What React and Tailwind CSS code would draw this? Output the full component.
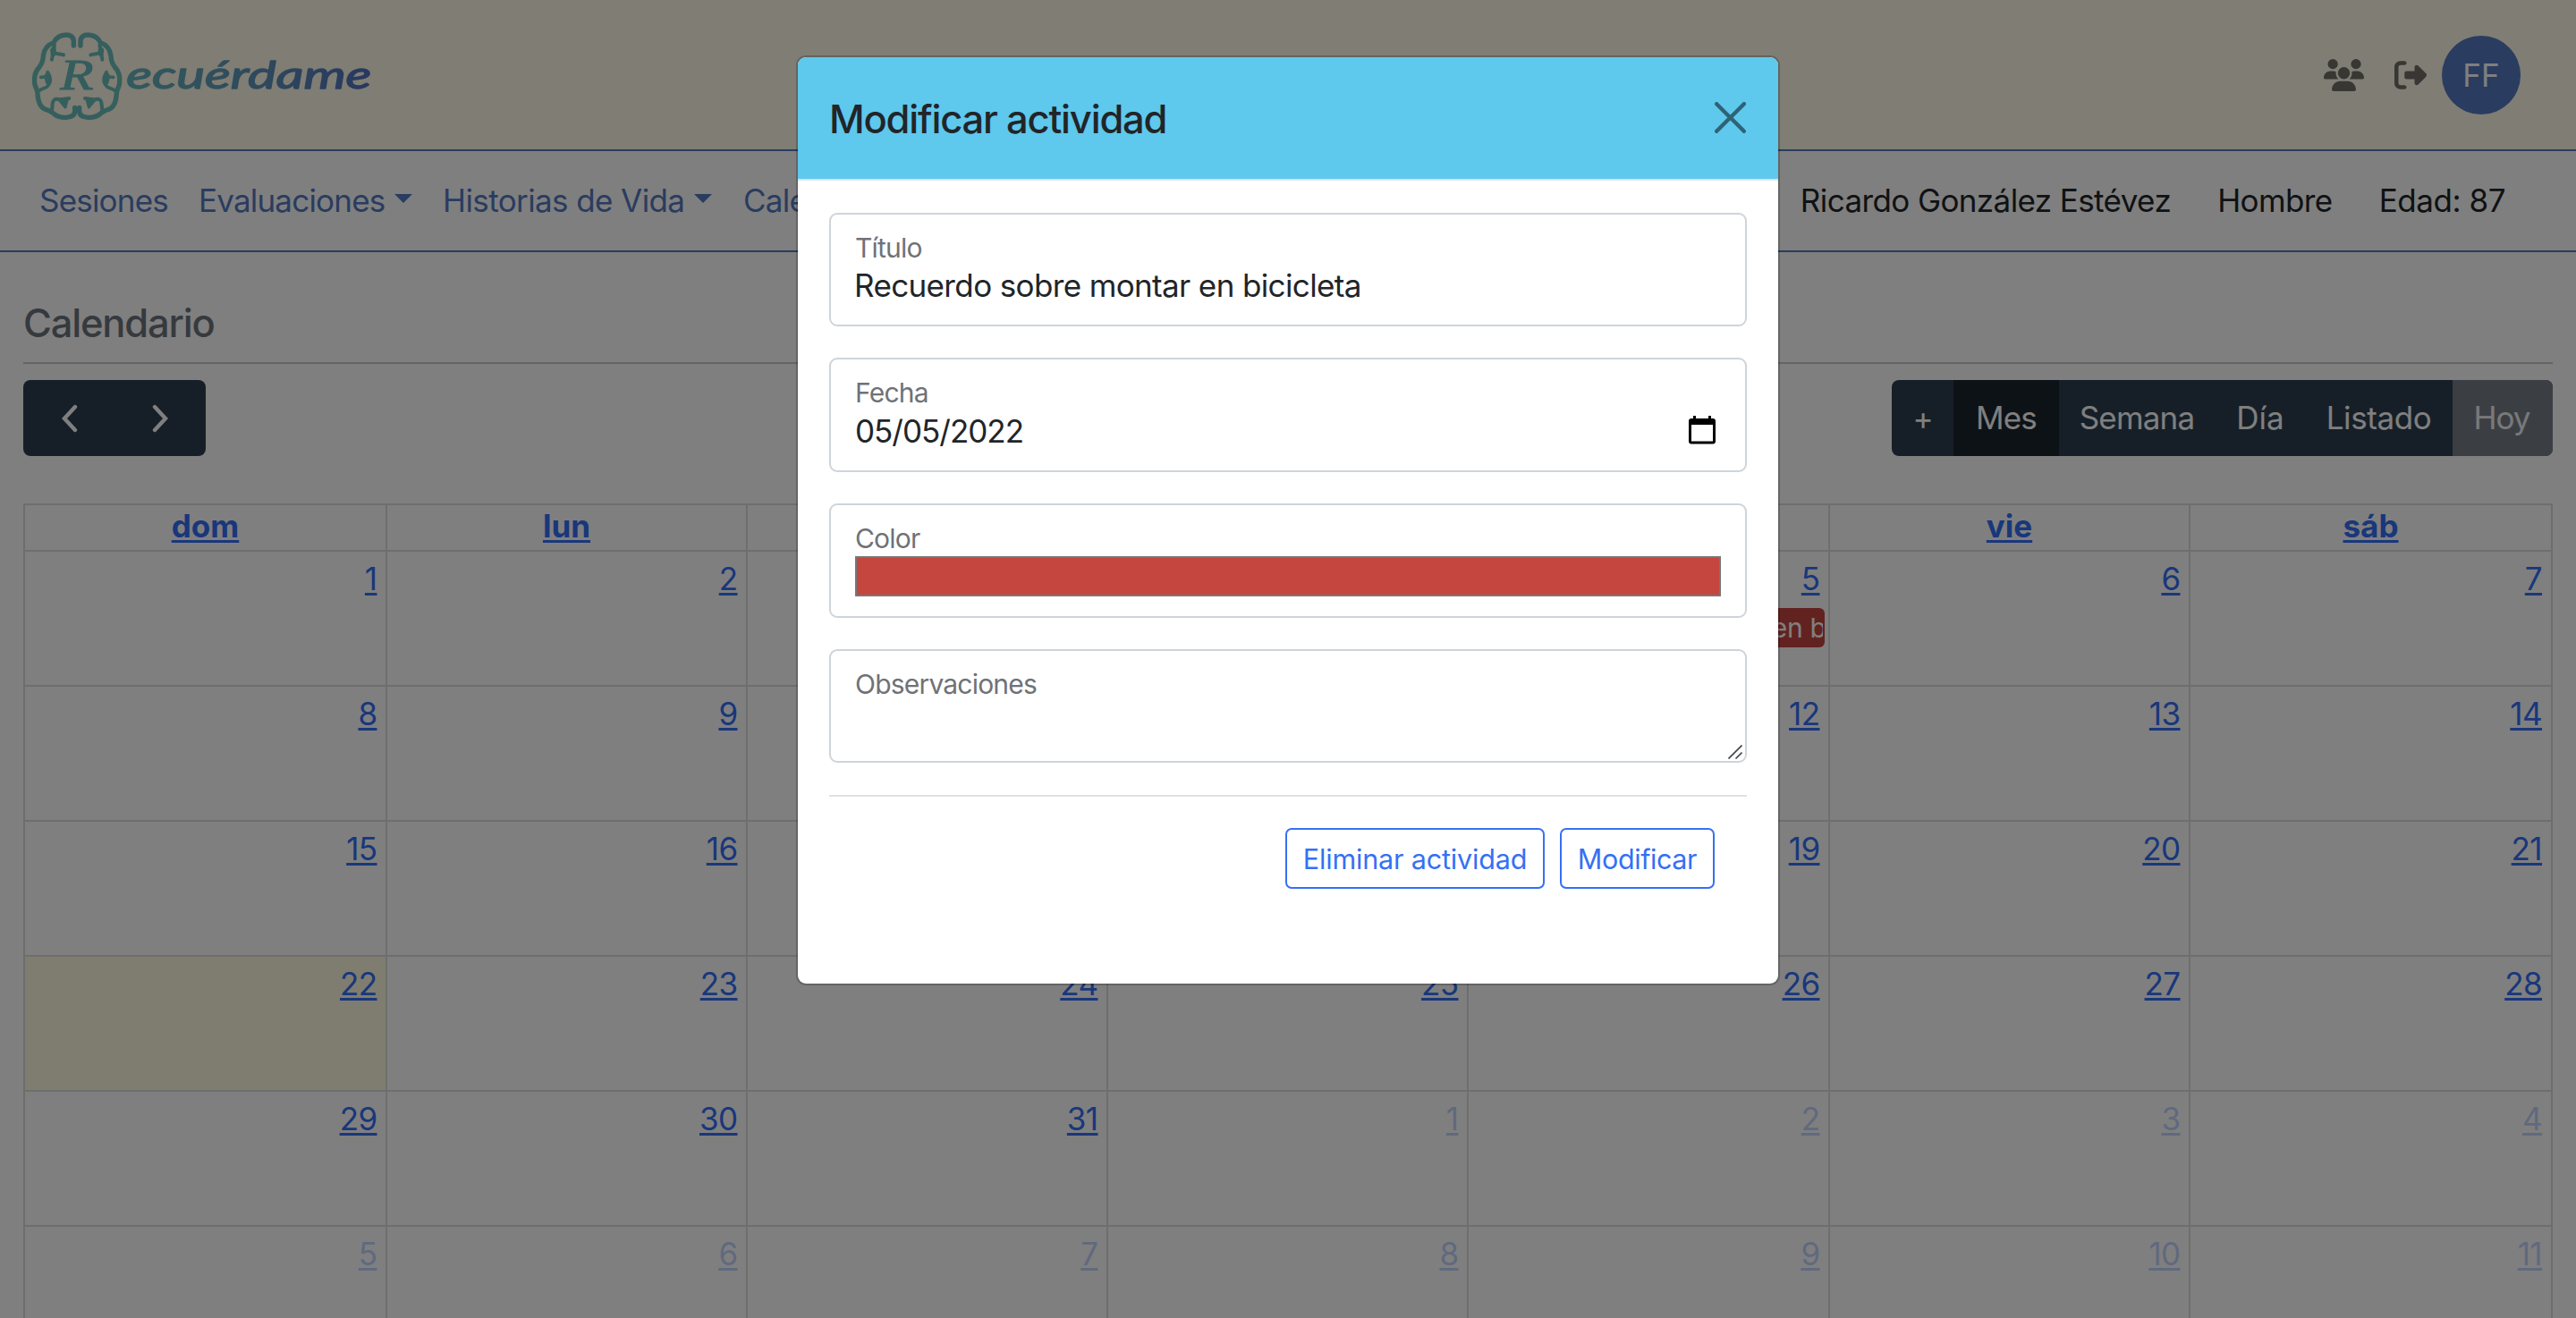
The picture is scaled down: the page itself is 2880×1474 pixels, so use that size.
import React from "react";
import { FaUsers } from "react-icons/fa6";

const DAYS = ["dom", "lun", "mar", "mié", "jue", "vie", "sáb"];
const WEEKS = [
  [1, 2, 3, 4, 5, 6, 7],
  [8, 9, 10, 11, 12, 13, 14],
  [15, 16, 17, 18, 19, 20, 21],
  [22, 23, 24, 25, 26, 27, 28],
  [29, 30, 31, 1, 2, 3, 4],
  [5, 6, 7, 8, 9, 10, 11],
];
const GRID = "grid grid-cols-[405px_403px_403px_403px_404px_403px_403px]";

function BrainHalf() {
  return (
    <g fill="none" strokeLinecap="round" strokeLinejoin="round">
      <path
        strokeWidth="16"
        d="M157 78V64C157 48 146 42 132 42C112 42 98 52 90 68C72 74 58 88 55 112C55 128 50 140 42 150C28 164 24 184 26 204C27 216 35 224 36 238C37 262 44 284 62 292C74 296 84 300 92 308C102 316 116 320 132 319C150 318 161 312 161 298V286"
      />
      <path strokeWidth="12" d="M91 70C96 82 86 94 92 102C102 108 114 105 123 109M90 104C85 110 85 116 84 125" />
      <path strokeWidth="11" fill="url(#ink)" d="M91 84L94 104L86 112L84 92Z" />
      <path strokeWidth="11" d="M47 184C58 185 68 180 70 167M70 167C82 186 82 202 68 216C60 222 48 222 38 232" />
      <path strokeWidth="9" fill="url(#ink)" d="M62 184L70 176L76 196L68 204Z" />
      <path strokeWidth="12" d="M84 294C88 276 82 262 98 257C112 262 130 256 142 255" />
      <path strokeWidth="9" fill="url(#ink)" d="M110 262L129 285L136 258Z" />
    </g>
  );
}

function Logo() {
  return (
    <svg width="400" height="120" viewBox="0 0 1200 360">
      <defs>
        <linearGradient id="ink" gradientUnits="userSpaceOnUse" x1="0" x2="1160" y1="0" y2="0">
          <stop offset="0" stopColor="#6cc2b8" />
          <stop offset="0.3" stopColor="#66b4bc" />
          <stop offset="0.65" stopColor="#5e94b8" />
          <stop offset="1" stopColor="#5070c0" />
        </linearGradient>
      </defs>
      <g stroke="url(#ink)">
        <BrainHalf />
        <g transform="translate(337 0) scale(-1 1)">
          <BrainHalf />
        </g>
      </g>
      <g fontStyle="italic" fill="url(#ink)" stroke="url(#ink)" strokeLinejoin="round">
        <text x="112" y="226" fontFamily="'Liberation Serif', serif" fontSize="146" textLength="112" lengthAdjust="spacingAndGlyphs" strokeWidth="3">
          R
        </text>
        <text x="334" y="223" fontFamily="Lato, sans-serif" fontSize="128" textLength="822" lengthAdjust="spacingAndGlyphs" strokeWidth="4">
          ecuérdame
        </text>
      </g>
    </svg>
  );
}

function Caret() {
  return <span className="mb-[5px] ml-[11px] h-0 w-0 border-x-[10.5px] border-t-[10.5px] border-x-transparent border-t-[#5478c0]" />;
}

function Header() {
  return (
    <header className="flex h-[169px] items-start justify-between border-b-2 border-[#5478c0] bg-[#fffae8] pl-[30px] pr-[62px]">
      <div className="pt-[25px]">
        <Logo />
      </div>
      <div className="flex h-[168px] items-center text-[#706e66]">
        <FaUsers className="h-[36px] w-[45px]" />
        <svg className="ml-[34px] h-[36px] w-[36px]" viewBox="0 0 512 512" fill="currentColor">
          <path d="M377.9 105.9L500.7 228.7c7.2 7.2 11.3 17.1 11.3 27.3s-4.1 20.1-11.3 27.3L377.9 406.1c-6.4 6.4-15 9.9-24 9.9c-18.7 0-33.9-15.2-33.9-33.9l0-62.1-128 0c-17.7 0-32-14.3-32-32l0-64c0-17.7 14.3-32 32-32l128 0 0-62.1c0-18.7 15.2-33.9 33.9-33.9c9 0 17.6 3.6 24 9.9zM160 96L96 96c-17.7 0-32 14.3-32 32l0 256c0 17.7 14.3 32 32 32l64 0c17.7 0 32 14.3 32 32s-14.3 32-32 32l-64 0c-53 0-96-43-96-96L0 128C0 75 43 32 96 32l64 0c17.7 0 32 14.3 32 32s-14.3 32-32 32z" />
        </svg>
        <div className="ml-[17px] flex h-[88px] w-[88px] items-center justify-center rounded-full bg-[#5478c0] text-[35px] text-white">FF</div>
      </div>
    </header>
  );
}

function Nav() {
  return (
    <nav className="flex h-[113px] items-center justify-between border-b-2 border-[#5478c0] pl-[44px] pr-[79px]">
      <div className="flex items-center text-[#5478c0]">
        <span className="w-[178px] tracking-[-0.8px]">Sesiones</span>
        <span className="flex w-[273px] items-center tracking-[-0.8px]">
          Evaluaciones
          <Caret />
        </span>
        <span className="flex w-[336px] items-center tracking-[-0.6px]">
          Historias de Vida
          <Caret />
        </span>
        <span className="tracking-[-0.7px]">Calendario</span>
      </div>
      <div className="flex items-center gap-[52px] text-[#212529]">
        <span className="tracking-[-0.6px]">Ricardo González Estévez</span>
        <span className="tracking-[-0.6px]">Hombre</span>
        <span className="tracking-[-0.45px]">Edad: 87</span>
      </div>
    </nav>
  );
}

function Toolbar() {
  return (
    <div className="mt-[18px] flex h-[85px] justify-between text-white">
      <div className="flex w-[204px] items-center rounded-[8px] bg-[#2c3e50] pl-[42px]">
        <svg width="20" height="32" viewBox="0 0 20 32" fill="none" stroke="currentColor" strokeWidth="4.4" strokeLinecap="round" strokeLinejoin="miter">
          <path d="M16 3L4 16L16 29" />
        </svg>
        <svg className="ml-[81px]" width="20" height="32" viewBox="0 0 20 32" fill="none" stroke="currentColor" strokeWidth="4.4" strokeLinecap="round" strokeLinejoin="miter">
          <path d="M4 3L16 16L4 29" />
        </svg>
      </div>
      <div className="flex overflow-hidden rounded-[8px] bg-[#2c3e50]">
        <button className="w-[69px] pl-[1px]">+</button>
        <button className="w-[118px] bg-[#1a252f] tracking-[-0.8px]">Mes</button>
        <button className="w-[175px] pr-[1px] tracking-[-0.8px]">Semana</button>
        <button className="w-[101px] pr-[1px] tracking-normal">Día</button>
        <button className="w-[164px] pr-[1px] tracking-[-0.4px]">Listado</button>
        <button className="w-[112px] bg-[#767f89] pr-[2px] tracking-[-1px] text-[#f2f3f4]">Hoy</button>
      </div>
    </div>
  );
}

function Calendar() {
  return (
    <div className="mt-[53px] h-[911px] overflow-hidden border-2 border-b-0 border-[#dcdcdc] text-[#326ef6]">
      <div className={GRID + " h-[52px] border-b-2 border-[#dcdcdc]"}>
        {DAYS.map((d, i) => (
          <div key={d} className={"flex items-center justify-center pb-[4px] font-bold " + (i < 6 ? "border-r-2 border-[#dcdcdc]" : "")}>
            <a className="leading-[44px] underline decoration-[3px] underline-offset-[3px]">{d}</a>
          </div>
        ))}
      </div>
      {WEEKS.map((w, r) => (
        <div key={r} className={GRID + " h-[151px] border-b-2 border-[#dcdcdc]"}>
          {w.map((n, c) => (
            <div
              key={c}
              className={
                "flex min-w-0 flex-col pt-1 " +
                (c < 6 ? "border-r-2 border-[#dcdcdc] pr-[9.5px] " : "pr-[10px] ") +
                (r === 3 && c === 0 ? "bg-[#fffadf]" : "")
              }
            >
              <a
                className={
                  "self-end leading-[52px] tracking-[-0.6px] underline decoration-[3px] underline-offset-[3px] " +
                  ((r === 4 && c > 2) || r === 5 ? "opacity-30" : "")
                }
              >
                {n}
              </a>
              {r === 0 && c === 4 && (
                <div className="-mr-[5px] ml-[4px] mt-[7px] h-[44px] rounded-[6px] bg-[#c44540] px-[2px] text-[30px] leading-[44px] text-white">
                  <div className="flex justify-end overflow-hidden whitespace-nowrap">
                    <span className="-mr-[102px] tracking-[-0.3px]">Recuerdo sobre montar en bicicleta</span>
                  </div>
                </div>
              )}
            </div>
          ))}
        </div>
      ))}
    </div>
  );
}

function Field({ label, className, children }) {
  return (
    <div className={"relative rounded-[9px] border-2 border-[#ced4da] bg-white px-[27px] pt-[19px] " + className}>
      <div className="text-[30px] leading-[36px] tracking-[-0.8px] text-[#6f7276]">{label}</div>
      {children}
    </div>
  );
}

function Modal() {
  return (
    <div className="flex h-[1040px] w-[1100px] flex-col rounded-[11px] border-2 border-black/20 bg-white bg-clip-padding text-[#212529]">
      <div className="flex h-[138px] items-center justify-between rounded-t-[9px] border-b-2 border-[#dee2e6] bg-[#5ec8ed] pl-[35px] pr-[36px]">
        <h2 className="pt-[3px] text-[43.5px] font-medium tracking-[-1.2px]">Modificar actividad</h2>
        <svg width="35" height="35" viewBox="0 0 16 16" className="mb-[2px] opacity-50" fill="#000">
          <path d="M.293.293a1 1 0 011.414 0L8 6.586 14.293.293a1 1 0 111.414 1.414L9.414 8l6.293 6.293a1 1 0 01-1.414 1.414L8 9.414l-6.293 6.293a1 1 0 01-1.414-1.414L6.586 8 .293 1.707a1 1 0 010-1.414z" />
        </svg>
      </div>
      <div className="flex flex-col px-[35px] pt-[36px]">
        <Field label="Título" className="h-[127px]">
          <div className="-ml-[1px] mt-[2px] leading-[44px] tracking-[-0.63px]">Recuerdo sobre montar en bicicleta</div>
        </Field>
        <Field label="Fecha" className="mt-[35px] h-[128px]">
          <div className="mt-[3px] flex items-center justify-between pr-[6px] leading-[44px]">
            <span className="tracking-[-1px]">05/05/2022</span>
            <svg className="mb-[2px]" width="30" height="32" viewBox="0 0 30 32" fill="#000">
              <path fillRule="evenodd" d="M5 0H8V3H22V0H25V3H27Q30 3 30 6V28.5Q30 31.5 27 31.5H3Q0 31.5 0 28.5V6Q0 3 3 3H5ZM3 10V28.5H27V10Z" />
            </svg>
          </div>
        </Field>
        <Field label="Color" className="mt-[35px] h-[128px]">
          <div className="mt-[2px] h-[45px] border-2 border-[#777777] bg-[#c4463f]" />
        </Field>
        <Field label="Observaciones" className="mt-[35px] h-[127px]">
          <svg className="absolute bottom-[2px] right-[3px]" width="16" height="16" viewBox="0 0 16 16" stroke="#444" strokeWidth="1.6" fill="none">
            <path d="M0.5 15.5L15.5 0.5M8.5 15.5L15.5 8.5" />
          </svg>
        </Field>
        <div className="mt-[36px] h-[2px] bg-[#dee2e6]" />
        <div className="mt-[35px] flex justify-end gap-[17px] pr-[36px] text-[30.5px] text-[#3570f5]">
          <button className="h-[68px] w-[290px] rounded-[7px] border-2 border-[#3570f5] pt-[1px] tracking-[-0.17px]">Eliminar actividad</button>
          <button className="h-[68px] w-[173px] rounded-[7px] border-2 border-[#3570f5] pt-[1px] tracking-[-0.4px]">Modificar</button>
        </div>
      </div>
    </div>
  );
}

export default function App() {
  return (
    <div className="relative h-[1474px] w-[2880px] overflow-hidden bg-white font-['Inter',sans-serif] text-[35px]">
      <Header />
      <Nav />
      <main className="px-[26px] pt-[45px]">
        <h1 className="h-[78px] pt-[8px] text-[43.5px] font-medium leading-[52px] tracking-[-1.2px] text-[#6c757d]">Calendario</h1>
        <div className="h-[2px] bg-[#c8c9ca]" />
        <Toolbar />
        <Calendar />
      </main>
      <div className="absolute inset-0 flex items-start justify-center bg-black/50 pt-[62px]">
        <Modal />
      </div>
    </div>
  );
}
